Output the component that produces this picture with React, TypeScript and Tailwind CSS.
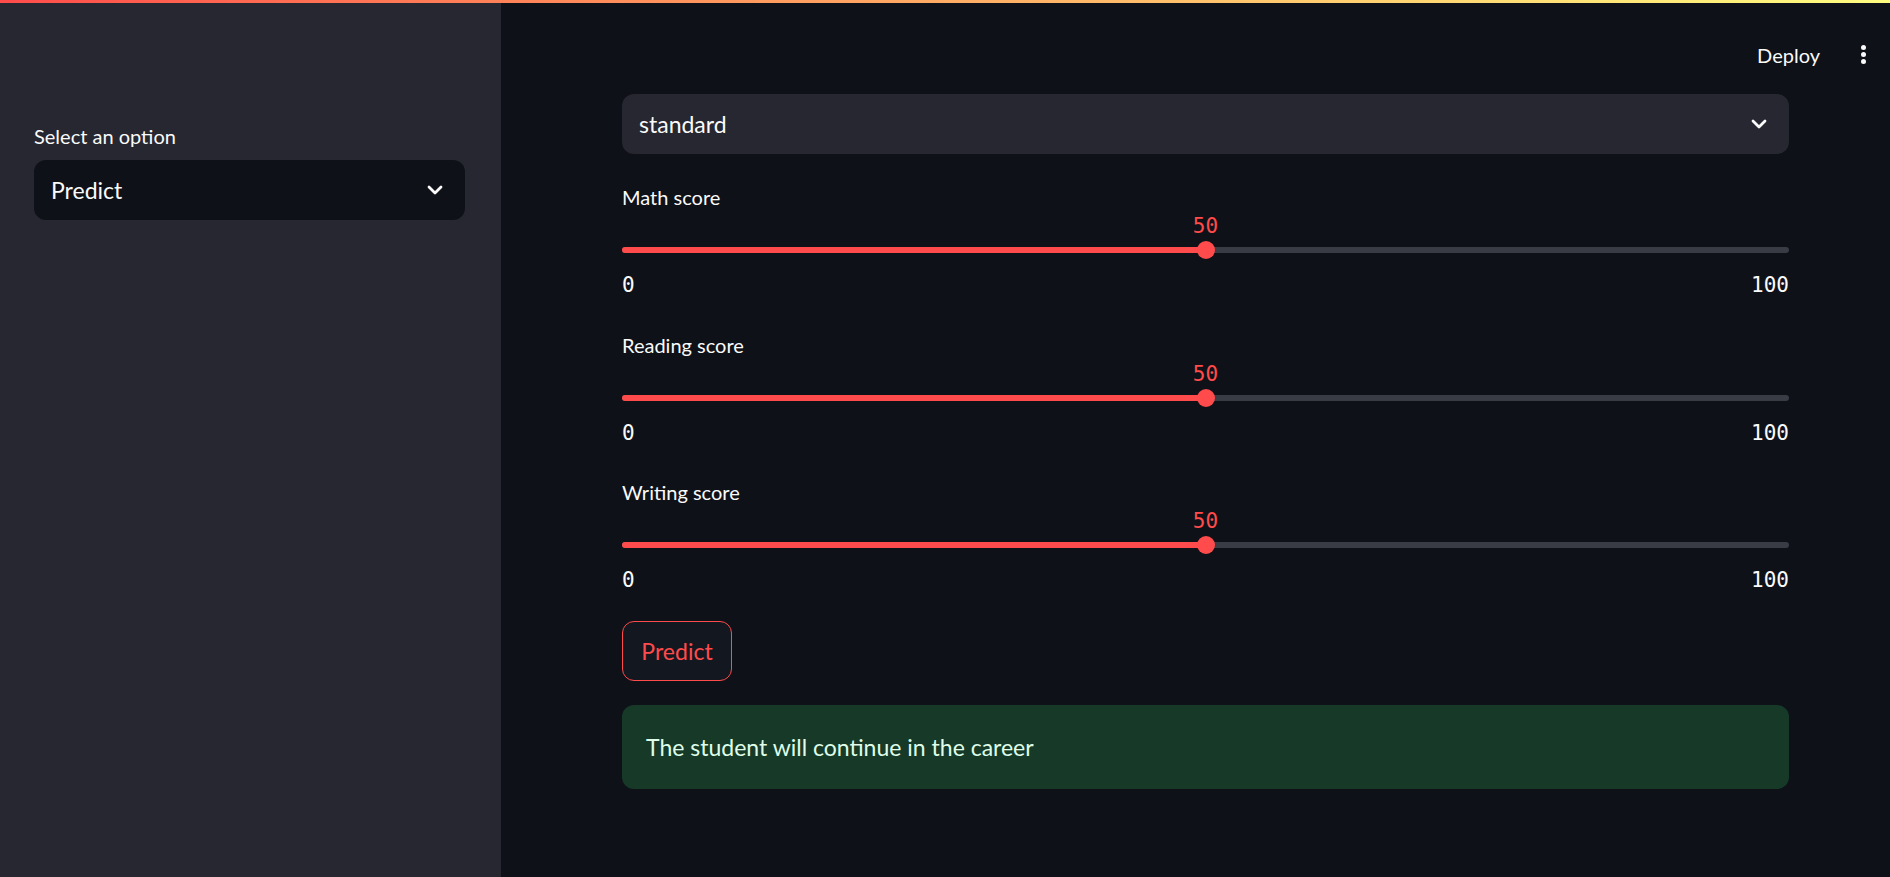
import React from "react";

const sans = { fontFamily: '"Lato", "Noto Sans", sans-serif' };

function Chevron({ className }: { className?: string }) {
  return (
    <svg className={className} width="16" height="10" viewBox="0 0 16 10" fill="none">
      <polyline points="2,2 8,8 14,2" stroke="#fafafa" strokeWidth="2.8" strokeLinecap="round" strokeLinejoin="round" />
    </svg>
  );
}

function Slider({ label, value, min, max }: { label: string; value: number; min: number; max: number }) {
  const pct = ((value - min) / (max - min)) * 100;
  return (
    <div className="flex flex-col">
      <div className="h-[30px] text-[20px] leading-[30px] text-[#fafafa]">{label}</div>
      <div className="relative h-[28px]">
        <span
          className="absolute top-0 -translate-x-1/2 font-['DejaVu_Sans_Mono',monospace] text-[21px] leading-[28px] text-[#ff4b4b]"
          style={{ left: `${pct}%` }}
        >
          {value}
        </span>
      </div>
      <div className="relative flex h-[20px] items-center">
        <div className="relative h-[6px] w-full rounded-full bg-[#393c45]">
          <div className="h-[6px] rounded-full bg-[#ff4b4b]" style={{ width: `${pct}%` }} />
        </div>
        <div
          className="absolute top-[1px] h-[18px] w-[18px] -translate-x-1/2 rounded-full bg-[#ff4b4b]"
          style={{ left: `${pct}%` }}
        />
      </div>
      <div className="mt-[13px] flex justify-between font-['DejaVu_Sans_Mono',monospace] text-[21px] leading-[24px] text-[#fafafa]">
        <span>{min}</span>
        <span>{max}</span>
      </div>
    </div>
  );
}

export default function App() {
  return (
    <div className="relative flex h-[877px] w-full overflow-hidden bg-[#0e1117]" style={sans}>
      <div className="absolute left-0 right-0 top-0 z-10 h-[3px] bg-gradient-to-r from-[#ff4b4b] to-[#fffd80]" />

      <aside className="flex w-[501px] shrink-0 flex-col bg-[#262730] px-[34px] pt-[121px]">
        <div className="text-[20px] leading-[30px] text-[#fafafa]">Select an option</div>
        <div className="mt-[9px] flex h-[60px] w-[431px] items-center justify-between rounded-[12px] bg-[#0e1117] pl-[17px] pr-[22px]">
          <span className="text-[23px] text-[#fafafa]">Predict</span>
          <Chevron />
        </div>
      </aside>

      <main className="flex flex-1 flex-col">
        <header className="flex h-[94px] items-start justify-end pr-[24px] pt-[40px]">
          <span className="text-[20px] leading-[30px] text-[#fafafa]">Deploy</span>
          <div className="ml-[41px] mt-[5px] flex flex-col items-center gap-[2px]">
            <span className="block h-[5px] w-[5px] rounded-full bg-[#fafafa]" />
            <span className="block h-[5px] w-[5px] rounded-full bg-[#fafafa]" />
            <span className="block h-[5px] w-[5px] rounded-full bg-[#fafafa]" />
          </div>
        </header>

        <div className="ml-[121px] flex w-[1167px] flex-col">
          <div className="flex h-[60px] items-center justify-between rounded-[12px] bg-[#262730] pl-[17px] pr-[22px]">
            <span className="text-[23px] text-[#fafafa]">standard</span>
            <Chevron />
          </div>

          <div className="mt-[28px]">
            <Slider label="Math score" value={50} min={0} max={100} />
          </div>
          <div className="mt-[33px]">
            <Slider label="Reading score" value={50} min={0} max={100} />
          </div>
          <div className="mt-[32px]">
            <Slider label="Writing score" value={50} min={0} max={100} />
          </div>

          <div className="mt-[29px]">
            <button className="flex h-[60px] w-[110px] items-center justify-center rounded-[12px] border border-[#ff4b4b] bg-[#131720] text-[23px] text-[#ff4b4b]">
              Predict
            </button>
          </div>

          <div className="mt-[24px] flex h-[84px] items-center rounded-[12px] bg-[#173a28] px-[24px]">
            <span className="text-[23px] text-[#dffde9]">The student will continue in the career</span>
          </div>
        </div>
      </main>
    </div>
  );
}
